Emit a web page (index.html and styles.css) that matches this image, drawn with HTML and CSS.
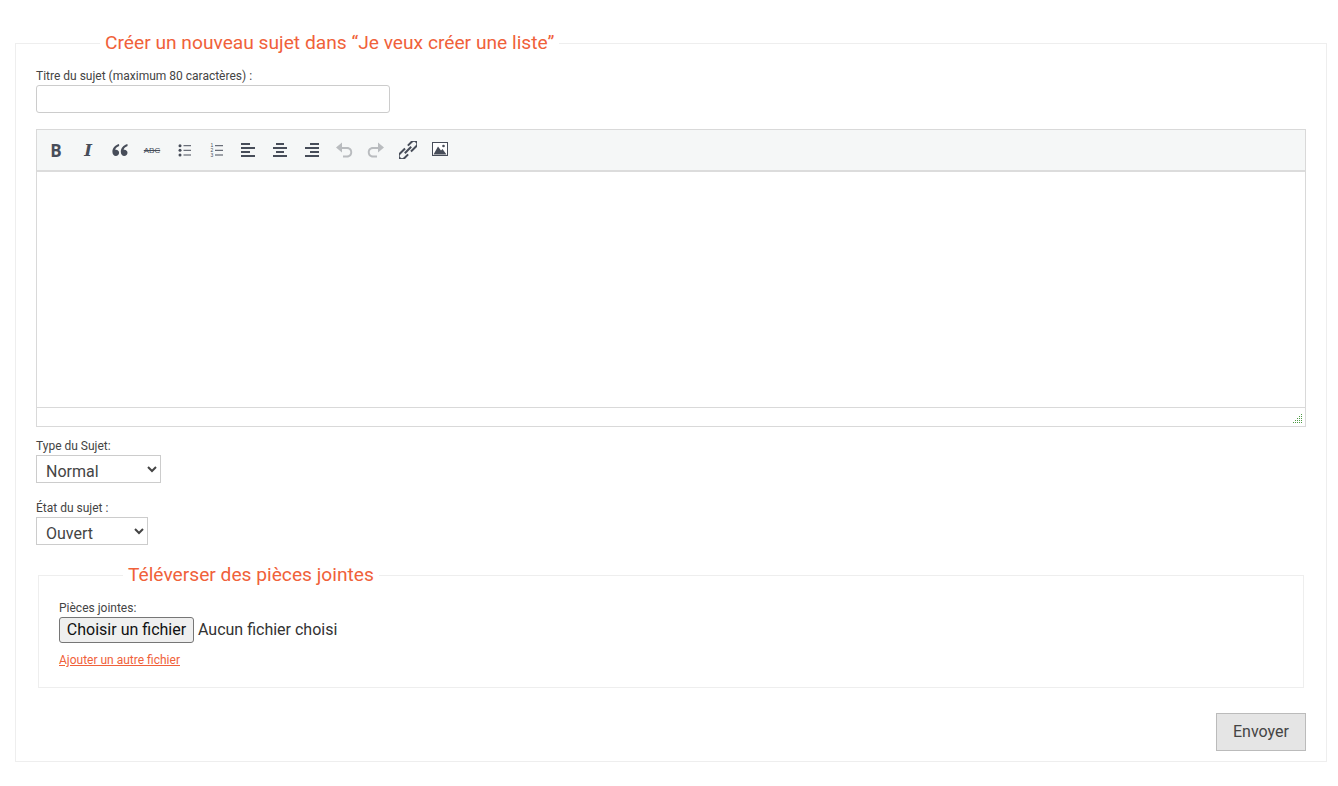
FILE: index.html
```html
<!DOCTYPE html>
<html lang="fr">
<head>
<meta charset="utf-8">
<title>Créer un nouveau sujet</title>
<link rel="stylesheet" href="styles.css">
</head>
<body>
<form class="page">
  <fieldset class="box box-main">
    <legend class="box-title">Créer un nouveau sujet dans “Je veux créer une liste”</legend>
    <div class="field field-title">
      <label class="label" for="t">Titre du sujet (maximum 80 caractères) :</label>
      <input class="text-input" id="t" type="text">
    </div>
    <div class="editor">
      <div class="toolbar">
        <span class="tool tool-b">B</span>
        <span class="tool tool-i">I</span>
        <span class="tool"><svg width="16" height="14" viewBox="0 0 16 14"><path class="fill" d="M7 1C3 2.300.4 5 .4 8.800c0 2.600 1.500 4.200 3.400 4.200s3.300-1.400 3.300-3.200S5.800 6.700 4 6.700c-.3 0-.6 0-.8.100.4-1.500 1.900-2.900 4-3.700zM15.400 1c-4 1.300-6.600 4-6.600 7.800 0 2.600 1.500 4.200 3.400 4.200s3.300-1.400 3.300-3.200-1.300-3.100-3.100-3.100c-.3 0-.6 0-.8.100.4-1.500 1.900-2.900 4-3.700z"/></svg></span>
        <span class="tool tool-s">ABC</span>
        <span class="tool"><svg width="16" height="16" viewBox="0 0 16 16"><g class="fill"><circle cx="4" cy="3.700" r="1.500"/><circle cx="4" cy="8.300" r="1.500"/><circle cx="4" cy="13" r="1.500"/><rect x="7.500" y="3.200" width="7.500" height="1"/><rect x="7.500" y="7.800" width="7.500" height="1"/><rect x="7.500" y="12.500" width="7.500" height="1"/></g></svg></span>
        <span class="tool"><svg width="16" height="16" viewBox="0 0 16 16"><g class="fill"><rect x="7" y="3.200" width="8" height="1"/><rect x="7" y="7.800" width="8" height="1"/><rect x="7" y="12.500" width="8" height="1"/></g><text class="nums" x="2.500" y="5">1</text><text class="nums" x="2.500" y="10">2</text><text class="nums" x="2.500" y="15">3</text></svg></span>
        <span class="tool"><svg width="16" height="16" viewBox="0 0 16 16"><g class="fill"><rect x="1" y="1" width="9" height="2"/><rect x="1" y="5" width="14" height="2"/><rect x="1" y="9" width="9" height="2"/><rect x="1" y="13" width="14" height="2"/></g></svg></span>
        <span class="tool"><svg width="16" height="16" viewBox="0 0 16 16"><g class="fill"><rect x="4" y="1" width="8" height="2"/><rect x="1" y="5" width="14" height="2"/><rect x="4" y="9" width="8" height="2"/><rect x="1" y="13" width="14" height="2"/></g></svg></span>
        <span class="tool"><svg width="16" height="16" viewBox="0 0 16 16"><g class="fill"><rect x="6" y="1" width="9" height="2"/><rect x="1" y="5" width="14" height="2"/><rect x="6" y="9" width="9" height="2"/><rect x="1" y="13" width="14" height="2"/></g></svg></span>
        <span class="tool"><svg width="18" height="16" viewBox="0 0 18 16"><path class="off" d="M7 .5 1 5.500l6 5V7h5c2.300 0 3.300 1.500 3.300 3.200s-1 3.300-3.300 3.300H8v2h4c3.400 0 5.200-2.500 5.200-5.300S15.400 5 12 5H7z"/></svg></span>
        <span class="tool"><svg width="18" height="16" viewBox="0 0 18 16"><path class="off" d="M11 .5l6 5-6 5V7H6c-2.300 0-3.300 1.500-3.300 3.200s1 3.300 3.300 3.300h4v2H6C2.600 15.500.8 13 .8 10.200S2.600 5 6 5h5z"/></svg></span>
        <span class="tool"><svg width="18" height="18" viewBox="0 0 18 18"><g class="link" transform="rotate(-45 9 9)"><path d="M8 5.800H.5a3.200 3.200 0 0 0 0 6.400H6"/><path d="M10 12.200h7.500a3.200 3.200 0 0 0 0-6.400H12"/><path d="M4.500 9h9"/></g></svg></span>
        <span class="tool tool-img"><svg width="16" height="14" viewBox="0 0 16 14"><rect class="frame" x=".5" y=".5" width="15" height="13"/><path class="fill" d="M1.500 12.500 6 4.500l3 4 1.500-1.500 4 5.500z"/><circle class="fill" cx="11.500" cy="4" r="1.300"/></svg></span>
      </div>
      <div class="editor-area"></div>
      <div class="statusbar"><svg class="grip" width="10" height="10" viewBox="0 0 10 10"><path d="M8 0h1v1H8zM8 2h1v1H8zM6 2h1v1H6zM8 4h1v1H8zM6 4h1v1H6zM4 4h1v1H4zM8 6h1v1H8zM6 6h1v1H6zM4 6h1v1H4zM2 6h1v1H2zM8 8h1v1H8zM6 8h1v1H6zM4 8h1v1H4zM2 8h1v1H2zM0 8h1v1H0z"/></svg></div>
    </div>
    <div class="field field-type">
      <label class="label" for="ty">Type du Sujet:</label>
      <select class="select select-type" id="ty"><option>Normal</option></select>
    </div>
    <div class="field field-state">
      <label class="label" for="st">État du sujet :</label>
      <select class="select select-state" id="st"><option>Ouvert</option></select>
    </div>
    <fieldset class="box box-inner">
      <legend class="box-title">Téléverser des pièces jointes</legend>
      <span class="label">Pièces jointes:</span>
      <div class="file"><button class="file-btn" type="button">Choisir un fichier</button><span class="file-name">Aucun fichier choisi</span></div>
      <a class="add-link" href="#">Ajouter un autre fichier</a>
    </fieldset>
    <div class="actions"><button class="send" type="button">Envoyer</button></div>
  </fieldset>
</form>
</body>
</html>
```
FILE: styles.css
```css
* { box-sizing: border-box; }
html, body { margin: 0; padding: 0; background: #fff; }
body { font-family: Roboto, "Liberation Sans", sans-serif; color: #333; font-size: 12px; }
.page { padding: 32px 11px 0 15px; }
.box { border: 1px solid #eeeeee; margin: 0; min-width: 0; }
.box-main { height: 730px; padding: 14px 20px 0; }
.box-title { font-size: 19.2px; line-height: 22px; color: #f0613a; padding: 0 5px; margin-left: 64px; }
.label { display: block; font-size: 12px; line-height: 14px; color: #444; }
.field-title { padding-top: 1px; }
.text-input { display: block; width: 354px; height: 28px; margin-top: 2px; border: 1px solid #ccc; border-radius: 3px; background: #fff; }
.editor { margin-top: 16px; height: 298px; border: 1px solid #d9d9d9; display: flex; flex-direction: column; width: 1270px; }
.toolbar { height: 42px; background: #f5f7f7; border-bottom: 2px solid #dcdcdc; display: flex; align-items: center; padding: 0 3px; flex: none; }
.tool { width: 32px; height: 40px; display: flex; align-items: center; justify-content: center; color: #474d59; flex: none; }
.tool-b { font: 700 17px "Open Sans", sans-serif; }
.tool-i { font: italic 700 16.5px "DejaVu Serif", serif; }
.tool-s { font: 8px "Liberation Sans", sans-serif; text-decoration: line-through; }
.tool-img { padding-bottom: 3px; }
.fill { fill: #474d59; }
.off { fill: #b9bcbf; }
.nums { font: 5px "Liberation Sans", sans-serif; fill: #474d59; }
.link { fill: none; stroke: #474d59; stroke-width: 2; }
.frame { fill: #fff; stroke: #474d59; }
.editor-area { flex: 1; background: #fff; }
.statusbar { height: 19px; border-top: 1px solid #d9d9d9; background: #fff; display: flex; justify-content: flex-end; align-items: flex-end; flex: none; padding: 0 2px 2px 0; }
.grip { fill: #4f9a45; }
.field-type { margin-top: 12px; }
.field-state { margin-top: 18px; }
.select { display: block; height: 28px; margin-top: 2px; padding: 5px 5px 0; border: 1px solid #ccc; background: #fff; font: 16px Roboto, sans-serif; color: #444; border-radius: 0; }
.select-type { width: 125px; }
.select-state { width: 112px; }
.box-inner { width: 1266px; height: 124px; margin: 19px 0 0 2px; padding: 15px 20px 0; }
.file { display: flex; align-items: center; gap: 4px; margin-top: 2px; height: 26px; font: 16px Roboto, sans-serif; color: #333; }
.file-btn { width: 135px; height: 26px; padding: 0 0 2px; font: 16px Roboto, sans-serif; color: #111; background: #efefef; border: 1px solid #767676; border-radius: 3px; }
.file-name { margin-bottom: 2px; }
.add-link { display: inline-block; margin-top: 10px; font-size: 12px; line-height: 14px; color: #f0613a; text-decoration: underline; }
.actions { display: flex; justify-content: flex-end; margin-top: 25px; }
.send { width: 90px; height: 38px; background: #e5e5e5; border: 1px solid #bbb; font: 16px Roboto, sans-serif; color: #444; padding: 0 0 2px; }
```
